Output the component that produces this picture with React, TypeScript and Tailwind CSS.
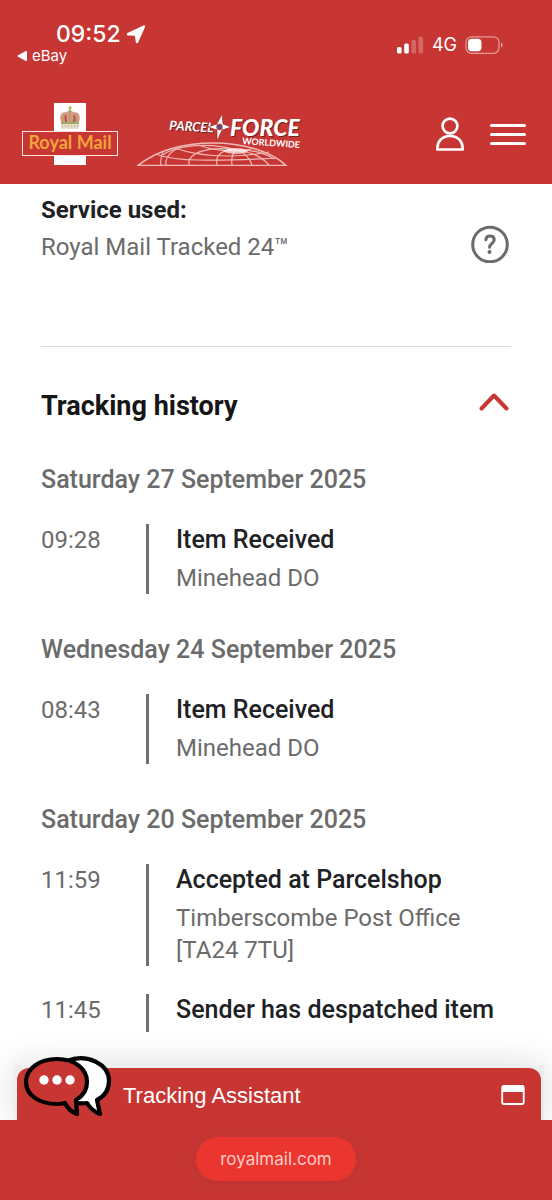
import React from "react";

type TrackingEvent = { time: string; title: string; place?: string[] };
type TrackingDay = { date: string; events: TrackingEvent[] };

const history: TrackingDay[] = [
  {
    date: "Saturday 27 September 2025",
    events: [{ time: "09:28", title: "Item Received", place: ["Minehead DO"] }],
  },
  {
    date: "Wednesday 24 September 2025",
    events: [{ time: "08:43", title: "Item Received", place: ["Minehead DO"] }],
  },
  {
    date: "Saturday 20 September 2025",
    events: [
      { time: "11:59", title: "Accepted at Parcelshop", place: ["Timberscombe Post Office", "[TA24 7TU]"] },
      { time: "11:45", title: "Sender has despatched item" },
    ],
  },
];

function StatusBar() {
  return (
    <div className="flex h-[84px] items-start justify-between pl-4 pr-12 pt-5 font-['Inter',sans-serif] text-white">
      <div>
        <div className="flex items-center gap-1 pl-10">
          <span className="text-[23px] font-medium leading-7">09:52</span>
          <svg className="size-[22px]" viewBox="0 0 22 22" fill="currentColor" stroke="currentColor" strokeWidth="2.400" strokeLinejoin="round" aria-hidden="true">
            <path d="M19 3.500 12 19 11 12.200 10 11.600 3 11.200Z" />
          </svg>
        </div>
        <a href="#ebay" className="flex items-center gap-1 text-[15px] leading-4">
          <svg className="size-3" viewBox="0 0 12 12" fill="currentColor" aria-hidden="true">
            <path d="M2 5.200 10 1c.6-.3 1 0 1 .6v8.800c0 .6-.4.9-1 .6L2 6.800c-.8-.4-.8-1.200 0-1.600Z" />
          </svg>
          eBay
        </a>
      </div>
      <div className="flex items-center pt-[13px]">
        <svg className="h-[18px] w-7" viewBox="0 0 28 18" fill="#fff" aria-hidden="true">
          <rect x="0" y="11" width="4.600" height="6.500" rx="1.500" />
          <rect x="7.200" y="7.500" width="4.600" height="10" rx="1.500" />
          <rect x="14.500" y="4" width="4.600" height="13.500" rx="1.500" opacity=".25" />
          <rect x="21.500" y=".5" width="4.600" height="17" rx="1.500" opacity=".25" />
        </svg>
        <span className="pl-[7px] pr-2 text-[18px] leading-6">4G</span>
        <svg className="h-[18px] w-[39px]" viewBox="0 0 39 18" aria-hidden="true">
          <rect x="1" y=".8" width="33" height="16.500" rx="5.500" fill="none" stroke="#e59a99" strokeWidth="1.300" />
          <rect x="3" y="2.800" width="13.500" height="12.500" rx="3.800" fill="#fff" />
          <path d="M36 6.500c2.300.7 2.300 4.300 0 5Z" fill="#e59a99" />
        </svg>
      </div>
    </div>
  );
}

function RoyalMailLogo() {
  return (
    <svg className="h-[62px] w-[98px]" viewBox="0 0 98 62" role="img" aria-label="Royal Mail">
      <rect x="33" width="32" height="62" fill="#fff" />
      <g>
        <path d="M40.500 20C37 12.500 41 8 45 9.500c1.500-2 6.500-2 8 0 4-1.500 8 3 4.500 10.500Z" fill="#d99a94" />
        <path d="M43 19c-2-5 0-8 2.500-8M55 19c2-5 0-8-2.500-8M49 9v10" fill="none" stroke="#b9a04e" strokeWidth="1.500" />
        <path d="M45.300 12.500c-1.500 2-.8 4.500.2 6.500M52.700 12.500c1.500 2 .8 4.500-.2 6.500" stroke="#b84b45" strokeWidth="1.800" fill="none" />
        <path d="M49 3v5M47.200 5h3.600" stroke="#c5b75f" strokeWidth="1.500" />
        <circle cx="49" cy="8.300" r="1.500" fill="#9eaa67" />
        <rect x="40" y="18.800" width="18" height="2.500" rx=".5" fill="#a2a86a" />
        <path d="M40.500 23h17" stroke="#ccb991" strokeWidth="2.500" strokeDasharray="2 1" />
        <path d="M40 25h18" stroke="#cfc4b2" strokeWidth="1" />
      </g>
      <rect x="1.500" y="28.500" width="95" height="24" fill="#c73633" stroke="#fbe3df" />
      <text x="49" y="46" textAnchor="middle" fill="#f2a33c" className="font-['Lato',sans-serif] text-[18px] font-bold">
        Royal Mail
      </text>
    </svg>
  );
}

function ParcelforceLogo() {
  return (
    <svg className="h-16 w-[170px]" viewBox="0 0 170 64" role="img" aria-label="Parcelforce Worldwide">
      <g transform="translate(0 10)">
        <g fill="none" stroke="#f0b9b5" strokeWidth="1.200">
          <path d="M1 53.500C22 37 47 31 76 31s58 8 73 22.500Z" strokeWidth="1.600" />
          <path d="M99 38C77 31 53 33 38 37c-6 2-10 4-12 6M99 38C73 34 50 40 52 53M99 38C84 37 78 44 80 53M99 38c-3 3-5 8-4 15M99 38c8 2 14 8 16 15M99 38c16 2 27 8 33 15M99 38c19-1 30 4 38 9" />
          <path d="M18 42c12 4 26 6 43 6 30 1 58-1 79-2M38 36c16 6 34 8 53 8 17 0 31-2 41-4M61 33c11 4 23 6 36 6 8 0 15-1 20-3M26 40c-2 5-3 9-2 13M44 35c-12 5-16 11-15 18" />
        </g>
        <ellipse cx="99" cy="39" rx="12" ry="3" fill="#fff" opacity=".65" />
      </g>
      <g className="font-['Lato',sans-serif]">
        <g fill="#742521">
          <text x="33" y="29" className="text-[13px] font-bold italic" transform="rotate(3 33 29)">PARCEL</text>
          <text x="94" y="35" className="text-[23px] font-black italic">FORCE</text>
        </g>
        <g fill="#fff">
          <text x="32" y="28" className="text-[13px] font-bold italic" transform="rotate(3 32 28)">PARCEL</text>
          <text x="93" y="34" className="text-[23px] font-black italic">FORCE</text>
          <text x="105" y="42" className="text-[9px] font-bold" transform="rotate(4 105 42)">WORLDWIDE</text>
        </g>
      </g>
      <path d="m85 12 1 10 8 3-9 3-5 11v-11l-9-3 9-3Z" fill="#fff" stroke="#8d2a27" strokeWidth=".6" />
      <circle cx="82.500" cy="25" r="3.200" fill="#c73633" />
      <circle cx="82.500" cy="25" r="2.200" fill="#49568c" />
    </svg>
  );
}

function Nav() {
  return (
    <div className="flex h-[100px] items-center pl-[21px] pr-[26px]">
      <a href="#royal-mail"><RoyalMailLogo /></a>
      <a href="#parcelforce" className="ml-[18px]"><ParcelforceLogo /></a>
      <button type="button" aria-label="Account" className="ml-auto">
        <svg className="h-[34px] w-[30px]" viewBox="0 0 30 34" fill="none" stroke="#fff" strokeWidth="2.600" strokeLinejoin="round" aria-hidden="true">
          <circle cx="14" cy="9" r="7.400" />
          <path d="M1.300 32.500C1 25 5.500 19 14 19s13 6 12.700 13.500Z" />
        </svg>
      </button>
      <button type="button" aria-label="Menu" className="ml-6">
        <svg className="h-6 w-9" viewBox="0 0 36 24" stroke="#fff" strokeWidth="3" strokeLinecap="round" aria-hidden="true">
          <path d="M1.500 3.500h33M1.500 12.500h33M1.500 21.500h33" />
        </svg>
      </button>
    </div>
  );
}

function ChatBubbles() {
  return (
    <svg className="h-16 w-[90px]" viewBox="0 0 90 64" stroke="#000" strokeWidth="4.200" strokeLinejoin="round" aria-hidden="true">
      <path d="M43 6c20-8 42 3 42 20 0 9-4 15-12 19l3 14c-6-2-10-6-13-11-8 1-16 0-22-4Z" fill="#fff" />
      <path d="M33 4C15 4 2 14 2 27s13 22 31 22c3 0 5 0 8-1 3 6 6 9 12 11l-1-14c7-4 11-10 11-18C63 14 51 4 33 4Z" fill="#c73633" />
      <g fill="#fff" stroke="none">
        <circle cx="20" cy="25" r="4.700" />
        <circle cx="33" cy="25" r="4.700" />
        <circle cx="46" cy="25" r="4.700" />
      </g>
    </svg>
  );
}

function EventRow({ time, title, place }: TrackingEvent) {
  return (
    <li className="flex">
      <time className="w-[105px] shrink-0">{time}</time>
      <div className="flex-1 border-l-3 border-[#707070] pl-[27px]">
        <h4 className="mb-[6px] text-[25px] font-medium leading-8 text-[#202124]">{title}</h4>
        {place?.map((line) => <p key={line}>{line}</p>)}
      </div>
    </li>
  );
}

export default function App() {
  return (
    <div className="flex min-h-screen flex-col bg-white font-['Roboto',sans-serif] text-[24px] leading-8 text-[#6b6b6b]">
      <header className="bg-[#c73633]">
        <StatusBar />
        <Nav />
      </header>

      <main className="flex-1 px-[41px] pb-[33px] pt-[10px]">
        <section className="flex items-end justify-between border-b border-[#dcdcdc] pb-[83px]">
          <div>
            <h2 className="mb-[5px] font-bold text-[#202124]">Service used:</h2>
            <p>Royal Mail Tracked 24™</p>
          </div>
          <button type="button" aria-label="About this service" className="mr-[2px]">
            <svg className="size-[38px]" viewBox="0 0 38 38" fill="none" stroke="#6b6b6b" strokeWidth="3" aria-hidden="true">
              <circle cx="19" cy="19.500" r="17.300" />
              <path d="M14.800 14.800c.3-2.500 2-3.700 4.200-3.700 2.500 0 4.200 1.400 4.200 3.600 0 4-4.600 3.500-4.600 7.600" strokeLinecap="round" />
              <circle cx="18.500" cy="27" r="2" fill="#6b6b6b" stroke="none" />
            </svg>
          </button>
        </section>

        <section>
          <div className="mt-[43px] flex items-center justify-between">
            <h2 className="text-[27px] font-bold leading-8 text-[#151515]">Tracking history</h2>
            <button type="button" aria-label="Collapse tracking history" aria-expanded="true" className="pb-2 pr-[2px]">
              <svg className="h-[19px] w-[30px]" viewBox="0 0 30 19" fill="none" stroke="#c73633" strokeWidth="4" strokeLinecap="round" strokeLinejoin="round" aria-hidden="true">
                <path d="M2.500 15.500 15 2.500l12.500 13" />
              </svg>
            </button>
          </div>
          <div className="mt-[42px] flex flex-col gap-10">
            {history.map((day) => (
              <section key={day.date}>
                <h3 className="mb-7 text-[25px] font-medium leading-8">{day.date}</h3>
                <ol className="flex flex-col gap-7">
                  {day.events.map((event) => <EventRow key={event.time} {...event} />)}
                </ol>
              </section>
            ))}
          </div>
        </section>
      </main>

      <div className="ml-[14px] mr-2 bg-[#ededed] px-[3px] pt-[3px] shadow-[0_0_36px_rgba(0,0,0,0.14)]">
        <button
          type="button"
          className="relative flex h-[52px] w-full items-center justify-between rounded-t-xl bg-[#c73633] pl-[106px] pr-4 font-['Liberation_Sans',sans-serif] text-[22px] text-white"
        >
          <span className="absolute -top-[13px] left-[7px]"><ChatBubbles /></span>
          <span className="pt-1">Tracking Assistant</span>
          <svg className="mt-[2px] h-5 w-6" viewBox="0 0 24 20" aria-hidden="true">
            <rect x="1.200" y="1" width="21.500" height="18" rx="1.500" fill="none" stroke="#fff" strokeWidth="1.800" />
            <path d="M1 1h22v6H1Z" fill="#fff" />
          </svg>
        </button>
      </div>

      <footer className="relative flex h-20 items-center justify-center bg-[#c73633]">
        <a
          href="#address"
          className="mb-[2px] rounded-full bg-[#eb362f] px-6 py-[10px] font-['Inter',sans-serif] text-[17px] leading-6 text-[#ffc9c5] shadow-[0_2px_14px_rgba(0,0,0,0.05)]"
        >
          royalmail.com
        </a>
      </footer>
    </div>
  );
}
